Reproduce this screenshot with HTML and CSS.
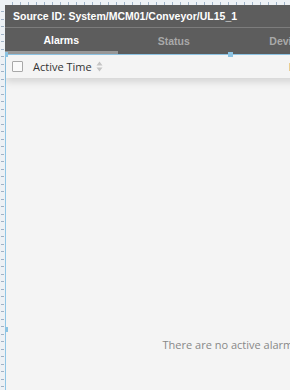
FILE: index.html
```html
<!DOCTYPE html>
<html>
<head>
    <title>Alarm Status Table</title>
    <link rel="stylesheet" href="styles.css">
</head>
<body>
    <div class="ruler-top"></div>
    <div class="workspace">
        <div class="ruler-left"></div>
        <div class="canvas">
            <div class="view">
                <div class="source-bar">Source ID: System/MCM01/Conveyor/UL15_1</div>
                <div class="tabs">
                    <div class="tab active">Alarms</div>
                    <div class="tab">Status</div>
                    <div class="tab">Device</div>
                    <div class="tab">Events</div>
                </div>
                <div class="alarm-table">
                    <div class="table-head">
                        <div class="check"></div>
                        <div class="col-title">Active Time</div>
                        <svg class="sort" width="7" height="13" viewBox="0 0 7 13">
                            <path d="M0.5 5.5 L3.5 1.5 L6.5 5.5 Z" fill="#c4c4c4"/>
                            <path d="M0.5 7.5 L3.5 11.5 L6.5 7.5 Z" fill="#c4c4c4"/>
                        </svg>
                        <div class="col-title second">Display Path</div>
                    </div>
                    <div class="table-body">
                        <div class="empty">There are no active alarms</div>
                    </div>
                    <div class="handle top-mid"></div>
                    <div class="handle top-left"></div>
                    <div class="handle left-mid"></div>
                </div>
            </div>
        </div>
    </div>
</body>
</html>
```
FILE: styles.css
```css
body { margin: 0; width: 290px; height: 390px; overflow: hidden; background: #f4f4f4; font-family: 'Liberation Sans', Arial, sans-serif; }
.ruler-top { height: 5px; background-color: #edf1f5; background-image: repeating-linear-gradient(90deg, transparent 0, transparent 7px, #9fb2c6 7px, #9fb2c6 8px); background-size: 100% 3px; background-repeat: no-repeat; background-position: 5px 2px; }
.workspace { display: flex; height: 385px; }
.ruler-left { width: 5px; flex: none; background-color: #edf1f5; background-image: repeating-linear-gradient(180deg, transparent 0, transparent 6.5px, #9fb2c6 6.5px, #9fb2c6 7.5px); background-size: 3px 100%; background-repeat: no-repeat; background-position: 1px 0; }
.canvas { flex: 1; overflow: hidden; }
.view { width: 450px; }
.source-bar { height: 22px; line-height: 23px; background: #5d5d5d; color: #fff; font-weight: bold; font-size: 10.5px; padding-left: 8px; border-bottom: 1px solid #7d7d7d; }
.tabs { display: flex; height: 26px; background: #5d5d5d; }
.tab { width: 113px; text-align: center; line-height: 26px; font-size: 10.5px; font-weight: bold; color: #a9a9a9; box-sizing: border-box; }
.tab.active { color: #fff; border-bottom: 3px solid #999; line-height: 25px; }
.alarm-table { position: relative; height: 546px; border-top: 1px solid #8fc6e6; border-left: 1px solid #8fc6e6; display: flex; flex-direction: column; }
.table-head { height: 23px; display: flex; align-items: center; background: #f4f4f4; box-shadow: 0 4px 7px rgba(0,0,0,0.13); font-family: 'Open Sans', sans-serif; font-size: 11px; color: #333; }
.check { width: 9px; height: 9px; border: 1px solid #a8a8a8; background: #fafafa; margin-left: 6px; border-radius: 1px; }
.col-title { margin-left: 10px; }
.sort { margin-left: 4px; }
.col-title.second { margin-left: 186px; color: #444; }
.table-body { flex: 1; display: flex; align-items: center; justify-content: center; padding-top: 9px; }
.empty { font-family: 'Open Sans', sans-serif; font-size: 11px; color: #888; }
.handle { position: absolute; width: 5px; height: 5px; background: #8cc3e2; }
.top-mid { left: 222px; top: -3px; }
.top-left { left: -3px; top: -3px; }
.left-mid { left: -3px; top: 272px; }
```
